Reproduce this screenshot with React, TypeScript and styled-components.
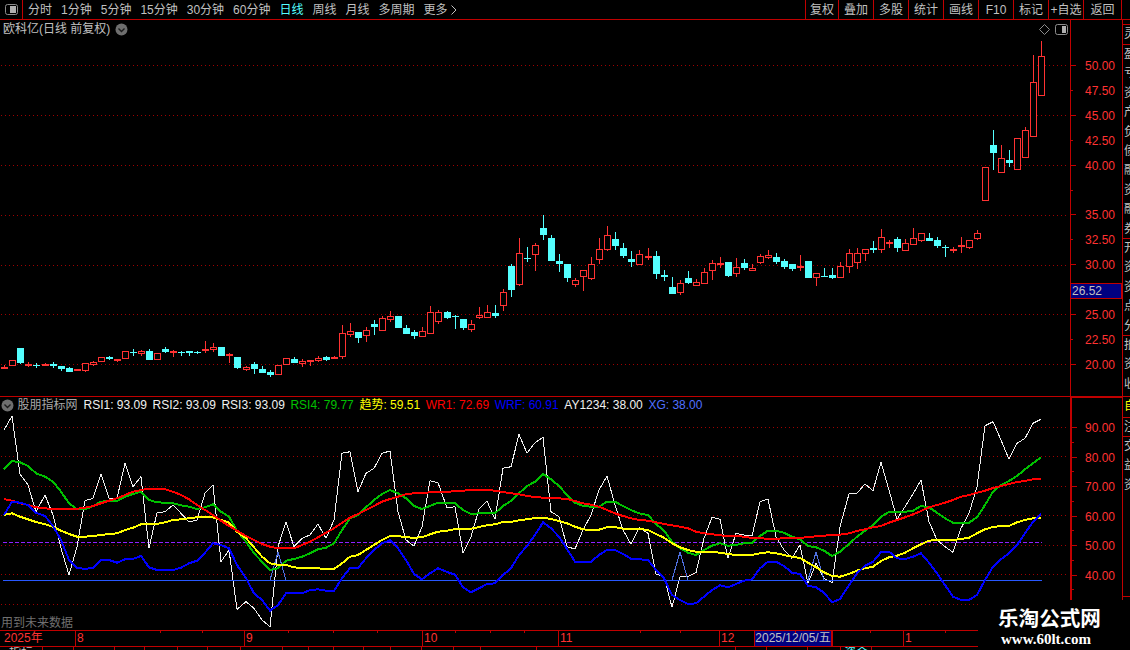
import React from 'react';
import styled, { createGlobalStyle } from 'styled-components';

const RED = '#c00000';
const AXIS = '#ff3232';
const CYAN = '#54ffff';
const GRAY = '#c0c0c0';

const Global = createGlobalStyle`
  html, body { margin: 0; padding: 0; background: #000; }
  body { font-family: "Liberation Sans", "Noto Sans CJK SC", sans-serif; font-size: 12px; }
`;

const Screen = styled.div`
  position: relative; width: 1130px; height: 650px; background: #000; overflow: hidden;
  display: flex; flex-direction: column; color: ${GRAY};
`;
const Toolbar = styled.div`
  flex: 0 0 20px; box-sizing: border-box; display: flex; align-items: stretch;
  border-bottom: 1px solid ${RED};
`;
const PanelToggle = styled.div`
  width: 23px; box-sizing: border-box; border-right: 1px solid ${RED};
  display: flex; align-items: center; justify-content: center;
`;
const Periods = styled.div`display: flex; align-items: center; gap: 9px; padding: 1px 0 0 5px;`;
const Period = styled.span<{ $active?: boolean }>`
  color: ${p => (p.$active ? CYAN : GRAY)}; line-height: 18px; white-space: nowrap;
  display: inline-flex; align-items: center; gap: 3px;
`;
const Actions = styled.div`display: flex; margin-left: auto; margin-right: 8px; border-right: 1px solid ${RED};`;
const Action = styled.div<{ $w: number }>`
  width: ${p => p.$w}px; box-sizing: border-box; border-left: 1px solid ${RED};
  text-align: center; padding-top: 1px; line-height: 18px; white-space: nowrap;
`;
const Body = styled.div`flex: 1; display: flex; min-height: 0;`;
const Charts = styled.div`width: 1122px; display: flex; flex-direction: column;`;
const Pane = styled.div<{ $h: number }>`
  flex: 0 0 ${p => p.$h}px; display: flex; box-sizing: border-box; border-bottom: 1px solid ${RED};
`;
const Plot = styled.div`position: relative; width: 1070px; flex: none;`;
const ChartSvg = styled.svg`display: block; width: 1070px; height: 100%;`;
const PaneHead = styled.div<{ $top: number; $left: number }>`
  position: absolute; left: ${p => p.$left}px; top: ${p => p.$top}px; display: flex; align-items: center; white-space: nowrap;
  line-height: 16px;
`;
const Title = styled.span`margin-left: 3px; margin-right: 5px; color: ${GRAY};`;
const IndicatorName = styled.span`margin: 0 6px 0 3.5px; color: #a8a8a8;`;
const Metric = styled.span<{ $c: string }>`color: ${p => p.$c}; margin-right: 5.6px;`;
const TopTools = styled.div`
  position: absolute; right: 2px; top: 4px; display: flex; align-items: center; gap: 5px;
`;
const Warning = styled.div`
  position: absolute; left: 1px; bottom: -1px; color: #707070; line-height: 16px;
`;
const Axis = styled.div<{ $pad: number; $strong?: boolean }>`
  position: relative; flex: 1; box-sizing: border-box; border-left: ${p => (p.$strong ? 2 : 1)}px solid ${RED};
  border-top: ${p => (p.$strong ? `1px solid ${RED}` : '0')};
  padding-top: ${p => p.$pad}px; overflow: hidden;
`;
const AxisRow = styled.div<{ $h: number; $major?: boolean }>`
  height: ${p => p.$h}px; position: relative; display: flex; align-items: center; justify-content: flex-end;
  padding-right: 7px; color: ${AXIS}; font-size: 12px; line-height: 14px;
  &::before {
    content: ''; position: absolute; left: 0; top: 0; height: 1px; background: ${RED};
    width: ${p => (p.$major ? 5 : 2)}px;
  }
  & > span { position: relative; top: ${p => 1 - p.$h / 2}px; }
`;
const PriceFlag = styled.div`
  position: absolute; left: 0; right: 0; top: 263px; height: 16px; box-sizing: border-box;
  background: #000080; border: 1px solid ${RED}; border-left: 0; color: ${GRAY}; line-height: 15px; padding-left: 1px;
`;
const Sidebar = styled.div`
  width: 8px; flex: none; box-sizing: border-box; border-left: 1px solid ${RED}; overflow: hidden;
  display: flex; flex-direction: column;
`;
const SideCell = styled.div<{ $h: number; $c?: string }>`
  height: ${p => p.$h}px; flex: none; box-sizing: border-box; border-bottom: 1px solid ${RED};
  overflow: hidden; color: ${p => p.$c || GRAY}; line-height: 19.4px; padding-left: 1px; width: 7px;
  & > span { display: block; width: 12px; }
`;
const TimeAxis = styled.div`
  flex: 0 0 16px; display: flex; box-sizing: border-box; position: relative; border-bottom: 1px solid ${RED};
  width: 978px;
`;
const TimeCell = styled.div<{ $w: number; $first?: boolean }>`
  width: ${p => p.$w}px; box-sizing: border-box; border-left: ${p => (p.$first ? 0 : `1px solid ${RED}`)};
  color: ${AXIS}; line-height: 15px; padding-left: ${p => (p.$first ? 4 : 1)}px; white-space: nowrap; flex: none;
`;
const DateCell = styled.div<{ $w: number }>`
  width: ${p => p.$w}px; box-sizing: border-box; flex: none; background: #000080; color: ${GRAY};
  border-left: 1px solid ${RED}; border-right: 1px solid ${RED}; line-height: 15px; text-align: center; white-space: nowrap;
`;
const TimeTick = styled.i<{ $x: number }>`
  position: absolute; top: 0; left: ${p => p.$x}px; width: 1px; height: 2px; background: ${RED};
`;
const BottomTabs = styled.div`flex: 1; display: flex; overflow: hidden; width: 978px;`;
const BottomTab = styled.div<{ $w: number; $c?: string }>`
  width: ${p => p.$w}px; flex: none; box-sizing: border-box; border-right: 1px solid ${RED};
  color: ${p => p.$c || GRAY}; line-height: 12px; text-align: center; overflow: hidden; white-space: nowrap; height: 4px;
`;
const Watermark = styled.div`
  position: absolute; right: 0; bottom: 0; width: 152px; height: 50px; background: #000; color: #fff;
  display: flex; flex-direction: column; align-items: flex-start; padding-left: 20px; box-sizing: border-box;
`;
const WmTitle = styled.div`
  font-family: "Noto Sans CJK SC", sans-serif; font-weight: 700; font-size: 20.6px; line-height: 24px; margin-top: 5px; white-space: nowrap;
`;
const WmUrl = styled.div`
  font-family: "Liberation Serif", serif; font-weight: 700; font-size: 15px; line-height: 15px; margin: 3px 0 0 3px; white-space: nowrap;
`;

type C = [string, number, number, number, number];
const z1: C[] = [
  ['r',201,206,195,206],['r',181,197,181,197],['c',144,188,144,191],['r',192,197,186,201],['c',194,197,190,203],
  ['r',191,195,188,197],['c',192,197,186,204],['c',198,206,198,212],['c',204,215,202,215],['r',208,214,208,214],
  ['r',190,212,190,215],['r',187,196,183,197],['r',172,187,172,187],['c',172,176,168,180],['r',178,182,178,186],
  ['r',154,178,154,178],['c',155,158,148,167],['r',154,163,150,167],['c',153,179,148,179],['r',160,181,160,181],
  ['c',148,156,141,159],['r',154,160,150,171],['c',155,158,152,167],['c',153,158,153,167],['c',155,158,152,162],
  ['r',146,151,123,158],['r',142,149,129,155],['c',141,167,141,167],['r',163,169,160,188],['c',171,203,171,207],
  ['r',202,211,198,212],['c',192,207,186,221],['c',207,218,198,218],['c',216,224,210,230],['r',196,226,196,226],
  ['r',175,196,175,196],['c',177,188,171,188],['r',184,192,178,201],['r',181,187,181,197],['r',175,184,169,186],
  ['c',171,179,168,182],['r',172,177,168,177],['r',100,170,75,176],['r',94,104,69,110],
];
const z2: C[] = [
  ['c',366,384,366,399],['r',361,377,351,396],['c',342,351,330,375],['r',325,362,318,362],['r',319,329,303,335],
  ['c',318,354,318,354],['c',354,372,345,372],['c',366,378,360,387],['r',364,380,351,380],['r',307,371,288,371],
  ['r',307,335,300,342],['c',306,324,303,327],['c',318,321,315,357],['c',327,354,327,360],['r',343,359,330,366],
  ['r',316,323,291,327],['r',307,323,285,323],['c',309,318,285,324],['r',247,287,237,303],['c',168,240,162,261],
  ['r',130,224,84,228],['c',144,147,111,156],['r',106,134,99,183],['c',54,75,15,90],['c',84,153,75,153],
  ['c',153,162,132,186],['c',162,204,162,216],['r',211,224,205,231],['r',181,200,181,243],['r',163,206,141,210],
  ['r',118,149,84,162],['r',76,119,48,123],['c',87,108,66,120],['c',114,138,99,144],['c',147,156,123,171],
  ['r',133,164,120,164],['r',138,144,114,150],['c',138,192,123,207],['c',195,201,180,213],['c',231,252,201,252],
  ['r',220,249,210,255],
  ['c',204,219,183,222],['r',217,227,207,227],['r',187,221,174,221],['r',160,182,150,210],['r',160,166,141,174],
  ['c',156,198,156,201],['r',172,191,144,201],['c',159,174,147,180],['r',175,182,162,182],['r',139,158,132,162],
  ['r',136,143,120,147],['c',141,156,129,162],['c',153,171,147,177],['c',162,177,162,183],['r',169,175,135,183],
  ['c',153,204,153,204],['r',190,205,190,228],['c',198,201,174,201],['c',195,204,174,207],['r',169,203,156,203],
  ['r',130,170,117,189],['r',130,158,114,177],['r',118,133,118,153],['c',114,120,93,129],['r',82,121,57,129],
  ['r',96,102,90,114],['c',87,114,81,126],['r',100,122,87,122],['r',85,104,54,104],['r',70,92,70,96],
  ['c',84,93,69,93],['c',90,108,81,114],['c',110,113,105,141],['r',116,119,111,129],['r',105,107,81,129],
  ['r',91,113,91,117],['r',70,86,60,90],
];
const z3: C[] = [
  ['r',167,201,167,201],['c',145,153,130,170],['r',158,173,145,173],['c',160,163,150,167],
  ['r',138,170,138,170],['r',130,158,127,158],['r',82,137,55,137],['r',56,96,41,96],
];
const candles: C[] = [
  ...z1.map(c => [c[0], 300 + c[1] / 3, 300 + c[2] / 3, 300 + c[3] / 3, 300 + c[4] / 3] as C),
  ...z2.map(c => [c[0], 210 + c[1] / 3, 210 + c[2] / 3, 210 + c[3] / 3, 210 + c[4] / 3] as C),
  ...z3,
];
const X = (i: number) => Math.round(4.33 + 8.04 * i);

const white = [90,48,222,255,335,285,345,445,525,440,302,295,222,295,295,190,260,230,445,338,335,315,340,366,360,280,255,485,450,628,605,625,660,680,440,366,440,415,405,372,415,360,160,
  155,275,220,205,160,153,335,420,438,380,242,248,323,320,458,410,328,303,358,205,200,103,160,128,112,335,350,440,447,390,345,270,228,315,390,433,383,400,522,530,622,530,530,518,
  415,352,358,475,400,405,408,305,297,410,450,475,435,550,490,535,548,380,282,280,252,272,187,270,358,320,282,240,365,420,440,457,385,340,260,77,65,120,178,130,115,70,58];
const green = [208,183,187,198,220,230,245,275,310,328,328,318,305,303,303,290,282,275,300,307,308,310,316,320,327,322,313,335,350,392,425,460,485,510,505,482,477,470,460,448,443,430,390,
  355,345,322,300,282,270,280,295,318,327,318,308,308,310,330,342,340,338,340,318,303,280,258,245,222,238,258,285,308,318,320,320,305,305,318,330,340,345,372,392,425,445,458,465,
  450,437,430,437,435,430,428,408,392,392,398,410,418,438,442,452,468,455,432,410,392,375,350,336,335,335,332,318,322,338,355,368,370,368,352,315,275,255,243,228,208,190,172];
const red = [297,302,310,315,322,325,327,327,327,326,323,318,310,302,295,285,275,270,266,266,268,275,285,298,315,330,345,362,378,392,408,420,432,440,445,445,445,435,425,412,398,385,368,
  353,342,330,318,305,297,290,283,280,279,277,276,275,274,272,270,269,270,272,276,280,283,288,291,293,295,295,297,303,310,314,320,330,340,348,355,360,362,367,372,376,380,385,395,
  400,403,406,408,408,410,414,415,416,416,415,414,413,412,409,407,405,404,400,393,388,382,378,368,360,352,343,333,322,315,308,300,290,285,278,272,264,258,252,246,243,238,236];
const yellow = [345,340,350,358,366,373,380,392,402,410,410,408,405,402,400,390,383,373,373,372,367,360,358,355,352,352,352,360,368,395,415,442,470,490,495,495,502,504,504,505,507,507,490,
  470,465,450,435,420,408,408,412,413,412,403,395,392,387,386,386,381,376,373,366,366,361,358,354,353,357,363,370,380,388,390,389,382,381,386,387,387,390,402,413,430,442,450,455,
  457,456,458,462,465,465,465,460,457,460,465,470,474,488,502,517,528,530,522,512,505,500,483,472,467,458,445,433,422,420,420,420,417,413,400,388,381,378,378,367,360,355,353];
const blue = [345,305,308,315,338,348,378,420,480,503,507,503,480,480,488,478,477,468,502,510,510,510,503,490,482,458,430,435,445,495,535,580,600,632,615,580,580,580,570,568,572,572,535,
  504,504,475,450,430,421,445,480,522,538,520,505,516,524,562,577,565,552,550,525,505,465,438,405,367,385,410,447,485,485,485,465,450,450,462,476,478,480,510,535,585,600,612,610,
  590,570,556,562,552,542,538,505,485,485,498,518,522,557,562,578,607,597,556,520,497,485,457,455,475,477,470,460,488,520,555,590,600,600,585,540,500,478,460,435,400,365,342];

const pts = (a: number[]) => a.map((v, i) => `${X(i)},${(400 + v / 3).toFixed(1)}`).join(' ');
const spike = (i: number) => `${X(i - 1)},580 ${X(i)},552 ${X(i + 1)},580`;

const mainGrid = [65, 115, 165, 215, 265, 314, 364];
const lowGrid = [427, 456, 486, 515, 545, 574, 604];

const DotDefs: React.FC<{ id: string }> = ({ id }) => (
  <defs>
    <pattern id={id} x="0" y="0" width="4" height="1" patternUnits="userSpaceOnUse">
      <rect x="1" y="0" width="1" height="1" fill="#a00000" />
    </pattern>
  </defs>
);
const GridLines: React.FC<{ id: string; ys: number[] }> = ({ id, ys }) => (
  <g>
    {ys.map(y => <rect key={y} x="0" y={y} width="1067" height="1" fill={`url(#${id})`} />)}
  </g>
);

const Candle: React.FC<{ c: C; i: number }> = ({ c, i }) => {
  const x = X(i);
  const color = c[0] === 'r' ? '#ff3232' : CYAN;
  const top = Math.round(c[1]);
  const bot = Math.max(Math.round(c[2]), top + 1);
  return (
    <g>
      <line x1={x + 0.5} x2={x + 0.5} y1={Math.round(c[3])} y2={Math.round(c[4])} stroke={color} />
      {c[0] === 'r' ? (
        <rect x={x - 2.5} y={top + 0.5} width={6} height={bot - top - 1 > 0 ? bot - top - 1 : 0.5} fill="#000" stroke={color} />
      ) : (
        <rect x={x - 3} y={top} width={7} height={bot - top} fill={color} />
      )}
    </g>
  );
};

const PanelIcon: React.FC<{ wide?: boolean }> = ({ wide }) => (
  <svg width="13" height="11" viewBox="0 0 13 11">
    <rect x="0.5" y="0.5" width="12" height="10" rx="2" fill="none" stroke="#8c8c8c" />
    <rect x={wide ? 5 : 7} y="2" width={wide ? 6 : 4} height="7" fill="#b0b0b0" />
  </svg>
);
const DownCircle: React.FC = () => (
  <svg width="13" height="13" viewBox="0 0 13 13">
    <circle cx="6.5" cy="6.5" r="6" fill="#6e6e6e" />
    <path d="M3.5 5.5 L6.5 8.5 L9.5 5.5" fill="none" stroke="#1c1c1c" strokeWidth="1.4" />
  </svg>
);

const periods = ['分时', '1分钟', '5分钟', '15分钟', '30分钟', '60分钟', '日线', '周线', '月线', '多周期'];
const actions: [string, number][] = [['复权', 33], ['叠加', 35], ['多股', 35], ['统计', 35], ['画线', 35], ['F10', 35], ['标记', 35], ['+自选', 35], ['返回', 38]];
const metrics: [string, string][] = [
  ['RSI1: 93.09', '#f0f0f0'], ['RSI2: 93.09', '#f0f0f0'], ['RSI3: 93.09', '#f0f0f0'], ['RSI4: 79.77', '#00c000'],
  ['趋势: 59.51', '#ffff00'], ['WR1: 72.69', '#ff0000'], ['WRF: 60.91', '#0000ff'], ['AY1234: 38.00', '#f0f0f0'], ['XG: 38.00', '#5070ff'],
];
const prices = ['50.00', '47.50', '45.00', '42.50', '40.00', '', '35.00', '32.50', '30.00', '', '25.00', '22.50', '20.00'];
const lows = ['90.00', '', '80.00', '', '70.00', '', '60.00', '', '50.00', '', '40.00', '', ''];
const timeTicks = [160, 202, 288, 333, 377, 455, 490, 524, 640, 680, 795, 870, 945];
const tabs: [string, number, string?][] = [['指标', 43], ['', 31], ['', 41], ['', 30], ['', 33], ['', 30], ['', 33], ['', 42], ['', 26], ['', 25], ['', 30], ['', 27], ['', 31], ['', 32], ['', 27], ['', 56], ['', 199], ['', 31], ['', 41], ['', 33], ['资金', 31, CYAN]];

const sideA = ['盈', '亏', '资', '产', '负', '债', '融', '资', '融', '券'];

const App: React.FC = () => (
  <Screen>
    <Global />
    <Toolbar>
      <PanelToggle><PanelIcon wide /></PanelToggle>
      <Periods>
        {periods.map(p => <Period key={p} $active={p === '日线'}>{p}</Period>)}
        <Period>
          更多
          <svg width="6" height="10" viewBox="0 0 6 10"><path d="M0.5 0.5 L5 5 L0.5 9.5" fill="none" stroke={GRAY} /></svg>
        </Period>
      </Periods>
      <Actions>
        {actions.map(([t, w]) => <Action key={t} $w={w}>{t}</Action>)}
      </Actions>
    </Toolbar>
    <Body>
      <Charts>
        <Pane $h={377}>
          <Plot>
            <ChartSvg viewBox="0 20 1070 376" preserveAspectRatio="none">
              <DotDefs id="dotsMain" />
              <GridLines id="dotsMain" ys={mainGrid} />
              <g shapeRendering="crispEdges">
                {candles.map((c, i) => <Candle key={i} c={c} i={i} />)}
              </g>
            </ChartSvg>
            <PaneHead $top={1} $left={0}>
              <Title>欧科亿(日线 前复权)</Title>
              <DownCircle />
            </PaneHead>
            <TopTools>
              <svg width="11" height="11" viewBox="0 0 11 11"><path d="M5.5 0.5 L10.5 5.5 L5.5 10.5 L0.5 5.5 Z" fill="none" stroke="#8c8c8c" /></svg>
              <PanelIcon />
            </TopTools>
          </Plot>
          <Axis $pad={45}>
            {prices.map((t, i) => (
              <AxisRow key={i} $h={24.92} $major={i % 2 === 0}><span>{t}</span></AxisRow>
            ))}
            <PriceFlag>26.52</PriceFlag>
          </Axis>
        </Pane>
        <Pane $h={234}>
          <Plot>
            <ChartSvg viewBox="0 397 1070 233" preserveAspectRatio="none">
              <DotDefs id="dotsLow" />
              <GridLines id="dotsLow" ys={lowGrid} />
              <g fill="none" shapeRendering="crispEdges">
                <line x1="3" x2="1042" y1="542.5" y2="542.5" stroke="#9020ff" strokeDasharray="4 2" />
                <polyline points={pts(white)} stroke="#f0f0f0" />
                <polyline points={spike(34)} stroke="#5070e0" />
                <polyline points={spike(84)} stroke="#5070e0" />
                <polyline points={spike(101)} stroke="#5070e0" />
                <line x1="3" x2="1042" y1="580.5" y2="580.5" stroke="#2858ff" />
                <polyline points={pts(green)} stroke="#00c000" strokeWidth="2" />
                <polyline points={pts(yellow)} stroke="#ffff00" strokeWidth="2" />
                <polyline points={pts(red)} stroke="#ff0000" strokeWidth="2" />
                <polyline points={pts(blue)} stroke="#0000ff" strokeWidth="2" />
              </g>
            </ChartSvg>
            <PaneHead $top={0} $left={1}>
              <DownCircle />
              <IndicatorName>股朋指标网</IndicatorName>
              {metrics.map(([t, c]) => <Metric key={t} $c={c}>{t}</Metric>)}
            </PaneHead>
            <Warning>用到未来数据</Warning>
          </Plot>
          <Axis $pad={29} $strong>
            {lows.map((t, i) => (
              <AxisRow key={i} $h={14.75} $major={i % 2 === 0}><span>{t}</span></AxisRow>
            ))}
          </Axis>
        </Pane>
        <TimeAxis>
          <TimeCell $first $w={75}>2025年</TimeCell>
          <TimeCell $w={169}>8</TimeCell>
          <TimeCell $w={178}>9</TimeCell>
          <TimeCell $w={136}>10</TimeCell>
          <TimeCell $w={161}>11</TimeCell>
          <TimeCell $w={35}>12</TimeCell>
          <DateCell $w={78}>2025/12/05/五</DateCell>
          <TimeCell $w={71} />
          <TimeCell $w={75}>1</TimeCell>
          {timeTicks.map(x => <TimeTick key={x} $x={x} />)}
        </TimeAxis>
        <BottomTabs>
          {tabs.map(([t, w, c], i) => <BottomTab key={i} $w={w} $c={c}>{t}</BottomTab>)}
        </BottomTabs>
      </Charts>
      <Sidebar>
        <SideCell $h={5} />
        <SideCell $h={20}>灵</SideCell>
        <SideCell $h={194}>{sideA.map((s, i) => <span key={i}>{s}</span>)}</SideCell>
        <SideCell $h={97}>{'开资资点分'.split('').map((s, i) => <span key={i}>{s}</span>)}</SideCell>
        <SideCell $h={61}>{'抵资收'.split('').map((s, i) => <span key={i}>{s}</span>)}</SideCell>
        <SideCell $h={21} $c="#ffff00">自</SideCell>
        <SideCell $h={19}>注</SideCell>
        <SideCell $h={160}>{'交益资'.split('').map((s, i) => <span key={i}>{s}</span>)}</SideCell>
      </Sidebar>
    </Body>
    <Watermark>
      <WmTitle>乐淘公式网</WmTitle>
      <WmUrl>www.60lt.com</WmUrl>
    </Watermark>
  </Screen>
);

export default App;
